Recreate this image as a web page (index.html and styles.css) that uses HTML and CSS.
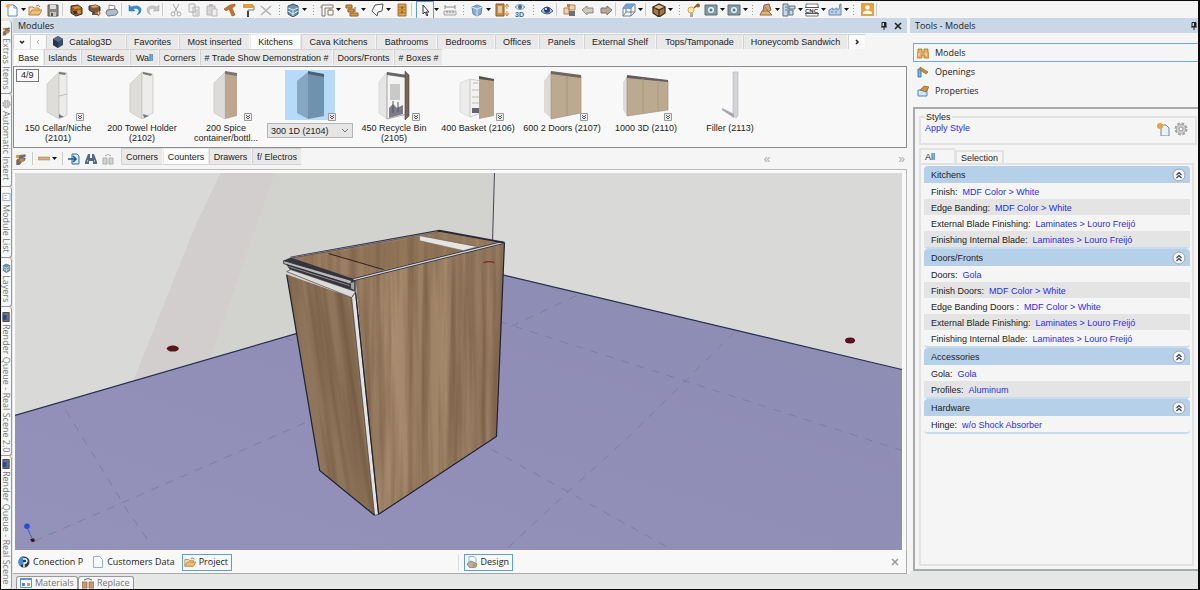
FILE: index.html
```html
<!DOCTYPE html>
<html lang="en">
<head>
<meta charset="utf-8">
<title>Modules</title>
<link rel="stylesheet" href="styles.css">
</head>
<body>
<svg class="defs" aria-hidden="true">
  <defs>
    <symbol id="caret" viewBox="0 0 5 3"><path d="M0 0h5L2.500 3z" fill="#111"/></symbol>
    <symbol id="page" viewBox="0 0 14 14"><path d="M3 2h6l3 3v8H3z" fill="#fff" stroke="#5d8fc4"/><path d="M9 2v3h3" fill="none" stroke="#5d8fc4"/><circle cx="3" cy="3" r="2" fill="#f4a431"/></symbol>
    <symbol id="folder" viewBox="0 0 14 14"><path d="M1 12V4h4l1 1h5v2" fill="#f7ddb0" stroke="#b98440"/><path d="M1 12l3-5h10l-3 5z" fill="#f0bd74" stroke="#b98440"/><path d="M8 3q3-2 4 1" fill="none" stroke="#777"/></symbol>
    <symbol id="save" viewBox="0 0 14 14"><path d="M2 2h10v11H2z" fill="#8b8885" stroke="#5d5955"/><path d="M4 2h6v4H4z" fill="#ddd"/><path d="M4 9h6v4H4z" fill="#c7c3be"/><path d="M5 10h2v3H5z" fill="#555"/></symbol>
    <symbol id="books" viewBox="0 0 14 14"><path d="M2 3l7-1 4 3v6l-6 2-5-3z" fill="#9c5c20" stroke="#3a3028"/><path d="M3 4l6-1 3 2-6 1z" fill="#df8e38"/><path d="M4 8h6v3H5z" fill="#35383d"/><circle cx="10" cy="9" r="2" fill="#e58a22"/></symbol>
    <symbol id="books2" viewBox="0 0 14 14"><path d="M2 3l7-1 4 2v4l-6 2-5-3z" fill="#7a5a38" stroke="#35302c"/><path d="M3 3l6-1 3 2-6 1z" fill="#df9b58"/><path d="M5 10h6v2H5z" fill="#555"/><path d="M8 10h3M11 8l2 2-2 3" stroke="#d07a3a" stroke-width="1.500" fill="none"/></symbol>
    <symbol id="printer" viewBox="0 0 14 14"><path d="M4 2l6 1-1 5H4z" fill="#fff" stroke="#888"/><path d="M2 7l9-1 2 3-2 3-8 1-2-3z" fill="#b7bcc1" stroke="#70767b"/><path d="M4 10l6-1 1 2-6 1z" fill="#9cc1e0"/></symbol>
    <symbol id="undo" viewBox="0 0 14 14"><path d="M1 2v6h6L5 6q5-2 6 2 0 2-2 4 5-2 4-6Q11 1 3 4z" fill="#2f8fd8" stroke="#1c6caa" stroke-width=".5"/></symbol>
    <symbol id="redo" viewBox="0 0 14 14"><path d="M13 2v6H7l2-2Q4 4 3 8q0 2 2 4-5-2-4-6Q3 1 11 4z" fill="#c5c5c5" stroke="#aaa" stroke-width=".5"/></symbol>
    <symbol id="cut" viewBox="0 0 14 14"><path d="M4 1l5 9M10 1L5 10" stroke="#aaa" fill="none"/><circle cx="4" cy="11" r="2" fill="none" stroke="#aaa"/><circle cx="10" cy="11" r="2" fill="none" stroke="#aaa"/></symbol>
    <symbol id="copy" viewBox="0 0 14 14"><path d="M2 1h6v8H2zM6 4h6v9H6z" fill="#eee" stroke="#b4b4b4"/><path d="M8 7h3M8 9h3M8 11h3" stroke="#bbb"/></symbol>
    <symbol id="paste" viewBox="0 0 14 14"><path d="M2 3h8v9H2z" fill="#d6d6d6" stroke="#b4b4b4"/><path d="M4 1h4v3H4z" fill="#bbb"/><path d="M7 6h5v7H7z" fill="#eee" stroke="#bbb"/></symbol>
    <symbol id="hammer" viewBox="0 0 14 14"><path d="M1 6l6-4 5-1v2L9 5l3 7-3 1-3-7-3 2z" fill="#c7712b" stroke="#90501d" stroke-width=".6"/></symbol>
    <symbol id="roller" viewBox="0 0 14 14"><path d="M2 1h10v4H2z" fill="#e79a38"/><path d="M12 3h1v4H7v2" fill="none" stroke="#777"/><path d="M6 8h2v6H6z" fill="#444"/></symbol>
    <symbol id="del" viewBox="0 0 14 14"><path d="M2 3l10 9M12 3L2 12" stroke="#b2b2b2" stroke-width="1.500"/></symbol>
    <symbol id="layers" viewBox="0 0 14 14"><path d="M7 1l5 2v8l-5 3-5-3V3z" fill="#6e95ad" stroke="#34576c"/><path d="M2 5l5 2 5-2M2 8l5 3 5-3M7 7v6" stroke="#d9eaf5" fill="none"/></symbol>
    <symbol id="rects" viewBox="0 0 14 14"><path d="M2 13V2h11v3H5v8z" fill="#fff" stroke="#777"/><path d="M8 7h5v5H8z" fill="#fff" stroke="#8b7558"/><path d="M1 3v2M10 5v3" stroke="#c57c2d"/></symbol>
    <symbol id="bricks" viewBox="0 0 14 14"><path d="M1 2h6v3H1zM3 6h6v3H3zM5 10h8v3H5z" fill="#d9963e" stroke="#94601f"/><path d="M10 4v5" stroke="#666"/></symbol>
    <symbol id="poly" viewBox="0 0 14 14"><path d="M5 2l8-1-1 7-4 1-1 4-5-5z" fill="#fafafa" stroke="#555"/></symbol>
    <symbol id="cabinet" viewBox="0 0 14 14"><path d="M3 1h8v12H3z" fill="#e0a050" stroke="#a8752e"/><path d="M3 4h8M3 7h8M3 10h8" stroke="#a8752e"/><path d="M6 5h2M6 9h2" stroke="#5c3b12"/></symbol>
    <symbol id="pointer" viewBox="0 0 14 14"><path d="M5 2v9l2-2 2 4 1-1-2-3h3z" fill="#fff" stroke="#333"/></symbol>
    <symbol id="ruler" viewBox="0 0 14 14"><path d="M1 8h12v4H1z" fill="#e3e3e3" stroke="#aaa"/><path d="M2 4h10M2 2v4M12 2v4M4 8v2M7 8v2M10 8v2" stroke="#888"/></symbol>
    <symbol id="cube" viewBox="0 0 14 14"><path d="M2 4l5-2 5 2-1 7-4 2-4-2z" fill="#8badcf" stroke="#6a8aae"/><path d="M2 4l5 2 5-2M7 6v7" stroke="#dcecfb" fill="none"/></symbol>
    <symbol id="cabs" viewBox="0 0 14 14"><path d="M1 1h8v12H1z" fill="#c98c49" stroke="#7f5b35"/><path d="M3 3h4v7H3z" fill="#e8c79a"/><path d="M12 1v5M10 4l2-3 2 3M12 8v5M10 10l2 3 2-3" stroke="#d9892c" fill="none"/></symbol>
    <symbol id="threed" viewBox="0 0 14 14"><path d="M2 4q5-5 10 0-5 5-10 0z" fill="#dfe9f2" stroke="#7194b5"/><circle cx="7" cy="4" r="2" fill="#36689b"/><text x="2" y="14" class="glyph">3D</text></symbol>
    <symbol id="eye" viewBox="0 0 14 14"><path d="M1 8q6-8 12 0-6 6-12 0z" fill="#b7c5dc" stroke="#4a5a7c"/><circle cx="7" cy="7" r="3" fill="#28427e"/><circle cx="6" cy="6" r="1" fill="#fff"/></symbol>
    <symbol id="boxes" viewBox="0 0 14 14"><path d="M1 5h5v6H1zM6 2h6v5H6z" fill="#f0d3ac" stroke="#a88355"/><path d="M6 8h6v5H6z" fill="#6b6f78"/><path d="M4 1h3v3H4z" fill="#cf7c2c"/></symbol>
    <symbol id="left" viewBox="0 0 14 14"><path d="M1 7l5-4v2h6v5H6v2z" fill="#cfc8bb" stroke="#8f897e"/></symbol>
    <symbol id="right" viewBox="0 0 14 14"><path d="M13 7L8 3v2H2v5h6v2z" fill="#b5a799" stroke="#807468"/></symbol>
    <symbol id="wire" viewBox="0 0 14 14"><path d="M1 5h8v8H1zM1 5l3-4h9L9 5zM13 1v8l-4 4M4 1v8h9M4 9l-3 4" fill="none" stroke="#708293"/><path d="M1 5l3-4h9L9 5z" fill="#67a6dc"/></symbol>
    <symbol id="box" viewBox="0 0 14 14"><path d="M1 4l6-3 6 3v6l-6 4-6-4z" fill="#a87645" stroke="#3f2c1c" stroke-width="1.300"/><path d="M1 4l6 3 6-3M7 7v7" fill="none" stroke="#3f2c1c" stroke-width="1.300"/><path d="M2 4l5-2 5 2-5 2z" fill="#e1bc8e"/></symbol>
    <symbol id="bulb" viewBox="0 0 14 14"><circle cx="5" cy="7" r="3" fill="#ffe7a6" stroke="#e0a33d"/><path d="M4 10h3v4H4z" fill="#aaa"/><path d="M8 5l3-3" stroke="#8a4e24" stroke-width="1.500"/><circle cx="12" cy="2.500" r="2" fill="#a05a26"/></symbol>
    <symbol id="cam" viewBox="0 0 14 14"><path d="M1 2h12v10H1z" fill="#84999f" stroke="#5c6e76"/><circle cx="7" cy="7" r="3" fill="#eef3f6"/><circle cx="7" cy="7" r="1.500" fill="#3a7bb3"/></symbol>
    <symbol id="worker" viewBox="0 0 14 14"><path d="M5 2l5-1 2 6-3 2-5-1z" fill="#d0a27a" stroke="#8c6340"/><path d="M1 12l2-4h6l4 4z" fill="#e7b46a" stroke="#8f6b43"/><path d="M6 4l3 4" stroke="#777"/></symbol>
    <symbol id="plan" viewBox="0 0 14 14"><path d="M1 1h5v12H1zM7 3h6v3H7zM7 7h4v5H7z" fill="#c9daea" stroke="#58708a"/><path d="M3 4h2M3 7h2" stroke="#58708a"/></symbol>
    <symbol id="cnc" viewBox="0 0 14 14"><path d="M1 1h12v12H1z" fill="#fff" stroke="#777"/><path d="M0 4h14v6H0z" fill="#fff"/><path d="M0 4.500h14M0 10.500h14" stroke="#555"/><text x="0" y="10" class="glyph cnc">CNC</text></symbol>
    <symbol id="factory" viewBox="0 0 14 14"><path d="M1 12V7l4-2v2l4-2v2l2-1 1-5h1v11z" fill="#b6d0e8" stroke="#698cab"/><path d="M3 9h2M7 9h2" stroke="#698cab"/></symbol>
    <symbol id="user" viewBox="0 0 14 14"><path d="M1 0h13v13H1z" fill="#e9a13b"/><circle cx="7.500" cy="4.500" r="2.200" fill="#fff"/><path d="M3 11V9q4-3 9 0v2z" fill="#fff"/></symbol>
    <symbol id="pin" viewBox="0 0 8 8"><path d="M2 .5h4v4H2zM1 5h6M4 5v3" fill="none" stroke="#222"/><path d="M4 1h2v4H4z" fill="#222"/></symbol>
    <symbol id="close" viewBox="0 0 8 8"><path d="M1 1l6 6M7 1L1 7" fill="none" stroke="currentColor" stroke-width="1.600"/></symbol>
    <symbol id="hex" viewBox="0 0 12 12"><path d="M6 0l5 3v6l-5 3-5-3V3z" fill="#3a4b66"/><path d="M6 0l5 3-5 3-5-3z" fill="#56698a"/><path d="M6 6v6l-5-3V3z" fill="#2a3549"/></symbol>
    <symbol id="more" viewBox="0 0 8 8"><path d="M.5.5h7v7h-7z" fill="#eee" stroke="#999"/><path d="M2 2l2 2 2-2M2 4l2 2 2-2" fill="none" stroke="#555"/></symbol>
    <symbol id="chev" viewBox="0 0 14 14"><circle cx="7" cy="7" r="6" fill="#f6f6f8" stroke="#9aa3ad"/><path d="M4.500 7L7 4.500 9.500 7M4.500 10L7 7.500 9.500 10" fill="none" stroke="#333c4e" stroke-width="1.200"/></symbol>
    <symbol id="books3" viewBox="0 0 14 14"><path d="M4 3l8-1v2L8 5l4 1-1 3-3 1-2 3-4 1V8l3-1z" fill="#74706c" stroke="#4c4844" stroke-width=".6"/><path d="M6 6l5 1-1 3-5 1z" fill="#b98a55"/><circle cx="3" cy="4" r="2" fill="#e09237"/><path d="M2 10h4v3H2z" fill="#8a6a48"/></symbol>
    <symbol id="plank" viewBox="0 0 12 6"><path d="M0 1h12v3H0z" fill="#d8ae78" stroke="#9a7c55" stroke-width=".5"/></symbol>
    <symbol id="export" viewBox="0 0 12 12"><path d="M4 1h5l2 2v8H4z" fill="#d9eaf8" stroke="#356da2"/><path d="M0 6h7M5 3l3 3-3 3" fill="none" stroke="#1d5a93" stroke-width="1.600"/></symbol>
    <symbol id="binoc" viewBox="0 0 12 12"><path d="M3 1h2v4h2V1h2l3 8v2H8V8H4v3H0V9z" fill="#4e6a88"/><path d="M2 8h1M9 8h1" stroke="#fff"/></symbol>
    <symbol id="graycopy" viewBox="0 0 12 12"><path d="M1 5h4v6H1zM7 5h4v6H7z" fill="#d2d2d2" stroke="#b0b0b0"/><path d="M3 3q3-3 6 0" stroke="#aaa" fill="none"/></symbol>
    <symbol id="models" viewBox="0 0 12 12"><path d="M1 2h4v3h2V2h4v3l1 2v4H7V8H5v3H0V7l1-2z" fill="#e9ae62" stroke="#a8742e" stroke-width=".8"/><path d="M2 6v3M9 6v3" stroke="#fbe0b6"/></symbol>
    <symbol id="openings" viewBox="0 0 12 12"><path d="M1 3h3v8H1z" fill="#7db4e8" stroke="#437fb8"/><path d="M3 1l8 5-2 2-6-4z" fill="#cf8a38" stroke="#8a5a23" stroke-width=".6"/></symbol>
    <symbol id="props" viewBox="0 0 12 12"><path d="M1 5h9v6H1z" fill="#cfe5f8" stroke="#4a89c4"/><path d="M3 5l4-4 5 1-3 5z" fill="#d38f3e" stroke="#7d5726" stroke-width=".6"/></symbol>
    <symbol id="newpage" viewBox="0 0 14 14"><path d="M5 3h5l3 3v8H5z" fill="#e8f1fa" stroke="#6d87a5"/><circle cx="4" cy="4" r="3" fill="#e8a23f"/></symbol>
    <symbol id="gear" viewBox="0 0 14 14"><circle cx="7" cy="7" r="5" fill="#c8c8c8" stroke="#a5a5a5" stroke-width="3" stroke-dasharray="2.500 1.400"/><circle cx="7" cy="7" r="4.500" fill="#cfcfcf" stroke="#aaa" stroke-width=".6"/><circle cx="7" cy="7" r="2" fill="#f5f5f5" stroke="#999"/></symbol>
    <symbol id="promob" viewBox="0 0 12 12"><circle cx="6" cy="6" r="5.500" fill="#283848"/><path d="M6 0A6 6 0 0 0 2 10L5 8V4z" fill="#3f8fd4"/><path d="M5 3h3q2 2 0 4H6v4" fill="none" stroke="#fff" stroke-width="1.400"/></symbol>
    <symbol id="doc" viewBox="0 0 12 12"><path d="M1.500.5h6l3 3v8h-9z" fill="#f6faff" stroke="#8db0d8"/></symbol>
    <symbol id="designer" viewBox="0 0 12 12"><path d="M3 .5h5l2 2v6H3z" fill="#f6faff" stroke="#8db0d8"/><path d="M1 8l4-3 6 3-1 3-6 1z" fill="#b8b3aa" stroke="#888"/><circle cx="8" cy="9" r="1.500" fill="#db8e2d"/></symbol>
    <symbol id="mats" viewBox="0 0 12 12"><path d="M.5 1.500h11v9H.5z" fill="#fff" stroke="#5f93d0"/><path d="M0 1h12v2H0z" fill="#5f93d0"/><path d="M2 6h3v3H2z" fill="#4c88cc"/><path d="M7 6h3v3H7z" fill="#e58f45"/></symbol>
    <symbol id="replace" viewBox="0 0 12 12"><path d="M0 5h5v6H0zM7 5h5v6H7z" fill="#c99a6c" stroke="#8f7050" stroke-width=".8"/><path d="M2 3q4-3 8 0" stroke="#666" fill="none"/></symbol>
    <symbol id="bluesq" viewBox="0 0 10 10"><path d="M1 1h8v8H1z" fill="#fff" stroke="#84a9d4"/><path d="M3 3h2v1H3zM3 6h2v1H3z" fill="#d05a3a"/></symbol>
    <symbol id="render" viewBox="0 0 10 10"><path d="M1 0h7v10H1z" fill="#6b6f7a" stroke="#444"/><path d="M1 3h4v5H1z" fill="#27449d"/></symbol>
  </defs>
</svg>

<div class="app">
  <header class="toolbar">
    <button class="ic tight" aria-label="New"><svg><use href="#page"/></svg><svg class="ca"><use href="#caret"/></svg></button>
    <button class="ic" aria-label="Open"><svg><use href="#folder"/></svg></button>
    <button class="ic" aria-label="Save"><svg><use href="#save"/></svg></button>
    <i class="sep"></i>
    <button class="ic" aria-label="Library"><svg><use href="#books"/></svg></button>
    <button class="ic" aria-label="Import library"><svg><use href="#books2"/></svg></button>
    <button class="ic" aria-label="Print"><svg><use href="#printer"/></svg></button>
    <i class="sep"></i>
    <button class="ic" aria-label="Undo"><svg><use href="#undo"/></svg></button>
    <button class="ic" aria-label="Redo"><svg><use href="#redo"/></svg></button>
    <i class="sep"></i>
    <button class="ic" aria-label="Cut"><svg><use href="#cut"/></svg></button>
    <button class="ic" aria-label="Copy"><svg><use href="#copy"/></svg></button>
    <button class="ic" aria-label="Paste"><svg><use href="#paste"/></svg></button>
    <button class="ic" aria-label="Build"><svg><use href="#hammer"/></svg></button>
    <button class="ic" aria-label="Paint"><svg><use href="#roller"/></svg></button>
    <button class="ic" aria-label="Delete"><svg><use href="#del"/></svg></button>
    <i class="grip"></i>
    <button class="ic drop" aria-label="Layers"><svg><use href="#layers"/></svg><svg class="ca"><use href="#caret"/></svg></button>
    <i class="grip"></i>
    <button class="ic drop" aria-label="Rooms"><svg><use href="#rects"/></svg><svg class="ca"><use href="#caret"/></svg></button>
    <button class="ic drop" aria-label="Walls"><svg><use href="#bricks"/></svg><svg class="ca"><use href="#caret"/></svg></button>
    <button class="ic drop" aria-label="Polygon"><svg><use href="#poly"/></svg><svg class="ca"><use href="#caret"/></svg></button>
    <button class="ic" aria-label="Cabinet"><svg><use href="#cabinet"/></svg></button>
    <i class="sep"></i>
    <button class="ic drop on" aria-label="Select"><svg><use href="#pointer"/></svg><svg class="ca"><use href="#caret"/></svg></button>
    <button class="ic" aria-label="Measure"><svg><use href="#ruler"/></svg></button>
    <i class="grip"></i>
    <button class="ic drop" aria-label="Solid"><svg><use href="#cube"/></svg><svg class="ca"><use href="#caret"/></svg></button>
    <button class="ic" aria-label="Dimensions"><svg><use href="#cabs"/></svg></button>
    <button class="ic" aria-label="3D view"><svg><use href="#threed"/></svg></button>
    <i class="grip"></i>
    <button class="ic" aria-label="Visibility"><svg><use href="#eye"/></svg></button>
    <i class="sep"></i>
    <button class="ic" aria-label="Group"><svg><use href="#boxes"/></svg></button>
    <button class="ic" aria-label="Previous"><svg><use href="#left"/></svg></button>
    <button class="ic" aria-label="Next"><svg><use href="#right"/></svg></button>
    <i class="sep"></i>
    <button class="ic drop" aria-label="Wireframe"><svg><use href="#wire"/></svg><svg class="ca"><use href="#caret"/></svg></button>
    <i class="sep"></i>
    <button class="ic drop" aria-label="Display"><svg><use href="#box"/></svg><svg class="ca"><use href="#caret"/></svg></button>
    <i class="grip"></i>
    <button class="ic" aria-label="Light"><svg><use href="#bulb"/></svg></button>
    <button class="ic tight" aria-label="Camera"><svg><use href="#cam"/></svg><svg class="ca"><use href="#caret"/></svg></button>
    <button class="ic tight" aria-label="Render"><svg><use href="#cam"/></svg><svg class="ca"><use href="#caret"/></svg></button>
    <i class="grip"></i>
    <button class="ic tight" aria-label="Assembly"><svg><use href="#worker"/></svg><svg class="ca"><use href="#caret"/></svg></button>
    <button class="ic tight" aria-label="Plan"><svg><use href="#plan"/></svg><svg class="ca"><use href="#caret"/></svg></button>
    <button class="ic tight" aria-label="CNC"><svg><use href="#cnc"/></svg><svg class="ca"><use href="#caret"/></svg></button>
    <button class="ic tight" aria-label="Factory"><svg><use href="#factory"/></svg><svg class="ca"><use href="#caret"/></svg></button>
    <i class="grip"></i>
    <button class="ic" aria-label="Account"><svg><use href="#user"/></svg></button>
    <i class="sep"></i>
  </header>

  <div class="body">
    <nav class="rail">
      <button class="vt v1"><svg><use href="#books3"/></svg><span>Extras Items</span></button>
      <button class="vt v2"><svg><use href="#gear"/></svg><span>Automatic Insert</span></button>
      <button class="vt v3"><svg><use href="#bluesq"/></svg><span>Module List</span></button>
      <button class="vt v4"><svg><use href="#layers"/></svg><span>Layers</span></button>
      <button class="vt v5"><svg><use href="#render"/></svg><span>Render Queue - Real Scene 2.0</span></button>
      <button class="vt v6"><svg><use href="#render"/></svg><span>Render Queue - Real Scene</span></button>
    </nav>

    <main class="center">
      <div class="titlebar"><h1>Modules</h1><span class="wbtns"><button aria-label="Pin"><svg><use href="#pin"/></svg></button><button aria-label="Close"><svg><use href="#close"/></svg></button></span></div>
      <div class="tabs top">
        <button aria-label="List" class="nav"><svg viewBox="0 0 8 8"><path d="M2 3l2 2 2-2" fill="none" stroke="#222" stroke-width="1.500"/></svg></button>
        <button aria-label="Back" class="nav"><svg viewBox="0 0 8 8"><path d="M5 2L3 4l2 2" fill="none" stroke="#aaa"/></svg></button>
        <button class="cat"><svg><use href="#hex"/></svg>Catalog3D</button>
        <button>Favorites</button>
        <button>Most inserted</button>
        <button class="sel">Kitchens</button>
        <button>Cava Kitchens</button>
        <button>Bathrooms</button>
        <button>Bedrooms</button>
        <button>Offices</button>
        <button>Panels</button>
        <button>External Shelf</button>
        <button>Tops/Tamponade</button>
        <button>Honeycomb Sandwich</button>
        <button aria-label="Forward" class="nav"><svg viewBox="0 0 8 8"><path d="M3 2l2 2-2 2" fill="none" stroke="#222" stroke-width="1.500"/></svg></button>
      </div>
      <div class="tabs sub">
        <button class="sel">Base</button>
        <button>Islands</button>
        <button>Stewards</button>
        <button>Wall</button>
        <button>Corners</button>
        <button># Trade Show Demonstration #</button>
        <button>Doors/Fronts</button>
        <button># Boxes #</button>
      </div>

      <section class="gallery">
        <span class="badge">4/9</span>
        <figure><svg class="pic" viewBox="0 0 50 50"><path d="M14 14L26 2v47l-12-7z" fill="#deddda" stroke="#c6c6c4" stroke-width=".7"/><path d="M26 2l8 1v42l-8 4z" fill="#edecea" stroke="#c2c2c0" stroke-width=".7"/><path d="M26 2l7 1-1 2-6-1zM26 44l5 3-5 1z" fill="#777"/><path d="M26 26l8-2" stroke="#bbb"/></svg><svg class="more"><use href="#more"/></svg><figcaption>150 Cellar/Niche<br>(2101)</figcaption></figure>
        <figure><svg class="pic" viewBox="0 0 50 50"><path d="M13 14L25 2v47l-12-7z" fill="#deddda" stroke="#c6c6c4" stroke-width=".7"/><path d="M25 2l11 2v39l-11 6z" fill="#edecea" stroke="#c2c2c0" stroke-width=".7"/><path d="M26 2l9 2-1 2-8-2zM26 44l6 2-5 2z" fill="#777"/></svg><figcaption>200 Towel Holder<br>(2102)</figcaption></figure>
        <figure><svg class="pic" viewBox="0 0 50 50"><path d="M13 13L24 2v47l-11-6z" fill="#dcdbd9" stroke="#c6c6c4" stroke-width=".7"/><path d="M24 2l12 2v42l-12 3z" fill="#bfa68e"/><path d="M24 1l12 2v3L24 4z" fill="#777"/></svg><svg class="more"><use href="#more"/></svg><figcaption>200 Spice<br>container/bottl...</figcaption></figure>
        <figure class="picked"><svg class="pic" viewBox="0 0 50 50"><path d="M12 11l11-9v47l-11-6z" fill="#86a6c2"/><path d="M23 2l16 3v41l-16 3z" fill="#6f92ae"/><path d="M23 1l16 3v3L23 4z" fill="#4c5f73"/></svg><svg class="more"><use href="#more"/></svg><select aria-label="Module"><option>300 1D (2104)</option></select></figure>
        <figure><svg class="pic" viewBox="0 0 50 50"><path d="M10 12l8-10v47l-8-6z" fill="#e6e5e3" stroke="#ccc" stroke-width=".6"/><path d="M18 3l20 3v38l-20 5z" fill="#f4f4f4" stroke="#aaa"/><path d="M18 2l20 3v3L18 5z" fill="#666"/><path d="M21 14h10v16H21z" fill="#c9c9c8"/><path d="M20 38l4-4 4 4 6-3v9l-14 4z" fill="#7b7b8a"/><path d="M24 31v12M29 32v10" stroke="#54575f"/><path d="M36 1l4 4v41l-4 4z" fill="#786556" stroke="#4b443f" stroke-width=".6"/></svg><svg class="more"><use href="#more"/></svg><figcaption>450 Recycle Bin<br>(2105)</figcaption></figure>
        <figure><svg class="pic" viewBox="0 0 50 50"><path d="M7 13l10-4v38L7 42z" fill="#ececea" stroke="#ccc" stroke-width=".6"/><path d="M17 9l11 2v32l-11 4z" fill="#f2f2f1" stroke="#ccc"/><path d="M20 13h5M19 20h7M19 27h7M19 33h7" stroke="#bbb"/><path d="M19 38h7v5h-7z" fill="#5e6573"/><path d="M26 7l15 3v36l-15 3z" fill="#b9a489"/><path d="M26 6l15 3v2L26 9z" fill="#555"/></svg><svg class="more"><use href="#more"/></svg><figcaption>400 Basket (2106)</figcaption></figure>
        <figure><svg class="pic" viewBox="0 0 50 50"><path d="M7 11l7-10v47l-7-6z" fill="#dddbd7"/><path d="M14 2l30 4v37l-30 6z" fill="#bcaa90" stroke="#9d8d78" stroke-width=".6"/><path d="M14 1l30 4v3L14 4z" fill="#6f675f"/><path d="M30 6v40" stroke="#a4947d"/></svg><svg class="more"><use href="#more"/></svg><figcaption>600 2 Doors (2107)</figcaption></figure>
        <figure><svg class="pic" viewBox="0 0 50 50"><path d="M2 12l4-6v40l-4-6z" fill="#dddbd7"/><path d="M6 6l41 5v29L6 46z" fill="#bcaa90" stroke="#9d8d78" stroke-width=".6"/><path d="M6 5l41 5v2L6 8z" fill="#625b64"/><path d="M22 8v35M37 10v31" stroke="#a4947d" stroke-width=".7"/></svg><svg class="more"><use href="#more"/></svg><figcaption>1000 3D (2110)</figcaption></figure>
        <figure><svg class="pic" viewBox="0 0 50 50"><path d="M28 2h5v44l-2 2-3-2z" fill="#d3d4d8" stroke="#b5b6bc" stroke-width=".6"/><path d="M17 38l12 6v4l-12-8z" fill="#a7a8ac"/></svg><figcaption>Filler (2113)</figcaption></figure>
      </section>

      <div class="subbar">
        <button aria-label="Edit library"><svg><use href="#books3"/></svg></button>
        <i class="sep"></i>
        <button aria-label="Panel" class="wide"><svg><use href="#plank"/></svg><svg class="ca"><use href="#caret"/></svg></button>
        <i class="sep"></i>
        <button aria-label="Export"><svg><use href="#export"/></svg></button>
        <button aria-label="Find"><svg><use href="#binoc"/></svg></button>
        <button aria-label="Swap"><svg><use href="#graycopy"/></svg></button>
        <div class="tabs mini">
          <button>Corners</button><button class="sel">Counters</button><button>Drawers</button><button>f/ Electros</button>
        </div>
        <span class="pager"><button aria-label="Scroll left">«</button><button aria-label="Scroll right">»</button></span>
      </div>

      <div class="viewport">
        <svg viewBox="15 173 888 378" preserveAspectRatio="xMidYMid slice" role="img" aria-label="Cabinet in a room">
          <defs>
            <filter id="grain" x="0" y="0" width="100%" height="100%" color-interpolation-filters="sRGB">
              <feTurbulence type="fractalNoise" baseFrequency=".12 .004" numOctaves="3" seed="11"/>
              <feColorMatrix values="0 0 0 0 .42  0 0 0 0 .32  0 0 0 0 .23  2 0 0 0 -.720"/>
            </filter>
            <linearGradient id="side" x1="0" x2="1" y1="0" y2="0">
              <stop offset="0" stop-color="#987c60"/><stop offset=".25" stop-color="#aa8d70"/><stop offset=".45" stop-color="#9c8064"/><stop offset=".6" stop-color="#a4886b"/><stop offset=".8" stop-color="#957a60"/><stop offset="1" stop-color="#a18468"/>
            </linearGradient>
            <linearGradient id="floor" x1="0" x2="1" y1="1" y2="0"><stop offset="0" stop-color="#9491bb"/><stop offset="1" stop-color="#8d8cb3"/></linearGradient>
            <clipPath id="cs"><path d="M356 281L505 243L497 437L379 515Z"/></clipPath>
            <clipPath id="cd"><path d="M287 275L352 298L375 516L320 471Z"/></clipPath>
            <clipPath id="ct"><path d="M291 259L440 232L505 244L355 280Z"/></clipPath>
          </defs>
          <path d="M15 173H903V551H15Z" fill="#d9d9d7"/>
          <path d="M275 173H494V290H200Z" fill="#d2d2cf"/>
          <path d="M275 173L200 390H320V280Z" fill="#d2d2cf"/>
          <path d="M221 173H275L200 390H130L196 225Z" fill="#d1cecd"/>
          <path d="M15 416L400 304L494 273L903 370V551H15Z" fill="url(#floor)"/>
          <path d="M15 416L400 304M494 273L903 370" stroke="#25304c" stroke-width="1.200" fill="none"/>
          <path d="M495 173L493 245" stroke="#445" fill="none"/>
          <g fill="none" stroke="#77799a" stroke-width=".8" stroke-dasharray="8 8">
            <path d="M66 411L128 512L151 545M34 542L128 501L322 416M285 338L322 353M500 322L903 451M577 296L505 330M735 333L632 435L568 493L508 549M492 450L566 491L672 550"/>
          </g>
          <ellipse cx="173" cy="349" rx="6" ry="3" fill="#571717"/>
          <ellipse cx="851" cy="341" rx="5" ry="3" fill="#5b1020"/>
          <path d="M291 259L440 231L505 243L355 282Z" fill="#9c7f63"/>
          <path d="M329 254L420 237L420 241L464 251L384 270Z" fill="#937759"/>
          <g clip-path="url(#ct)"><path d="M285 225H510V290H285Z" filter="url(#grain)" opacity=".5"/></g>
          <path d="M420 236L478 247L464 251L420 241Z" fill="#e7e5e1" stroke="#555" stroke-width=".5"/>
          <path d="M329 254L384 270" stroke="#2a2522"/>
          <path d="M356 281L505 243L497 437L379 515Z" fill="url(#side)"/>
          <g clip-path="url(#cs)"><path d="M350 240H510V520H350Z" filter="url(#grain)" opacity=".75"/></g>
          <path d="M287 275L352 298L375 516L320 471Z" fill="#8f755b"/>
          <g clip-path="url(#cd)"><g transform="rotate(-8 320 390)"><path d="M262 240H380V550H262Z" filter="url(#grain)" opacity=".7"/></g></g>
          <path d="M284 261L291 258L356 280L356 293L290 270Z" fill="#35343a"/>
          <path d="M284 261L352 281L352 285L284 264Z" fill="#b6b6bc" stroke="#222" stroke-width=".8"/>
          <path d="M289 267L350 286" stroke="#8b8b94"/>
          <path d="M351 283L355 282L355 291L351 289Z" fill="#a3a3b0" stroke="#333" stroke-width=".6"/>
          <path d="M287 272L291 270L356 292L352 298Z" fill="#dcdbd9" stroke="#333" stroke-width=".6"/>
          <path d="M352 298L356 293L379 515L375 516Z" fill="#e4e3df" stroke="#333" stroke-width=".7"/>
          <path d="M354 280L503 243" stroke="#2c2e3a" stroke-width="3" fill="none"/>
          <path d="M354 280L503 243" stroke="#cfd0d6" stroke-width="1.400" fill="none"/>
          <path d="M291 258L440 231L505 243" stroke="#25283a" stroke-width="2" fill="none"/>
          <path d="M291 258L438 232" stroke="#a3a5b2" stroke-width=".7" fill="none"/>
          <path d="M505 243L497 437L379 515M356 293L379 515M287 275L320 471L375 516" fill="none" stroke="#1d2130" stroke-width="1.200"/>
          <path d="M484 263Q490 261 495 263" stroke="#7b2c25" stroke-width="1.300" fill="none"/>
          <path d="M32 539L27 528" stroke="#3a55e0"/><circle cx="27" cy="527" r="2.800" fill="#2b4bdd"/>
          <path d="M34 535L51 528L47 532L37 534Z" fill="#7fa3a0"/><path d="M30 540l4-1 1 3-3 1z" fill="#3a1613"/>
        </svg>
      </div>

      <div class="docs">
        <div class="dgroup"><button><svg><use href="#promob"/></svg>Conection P</button><button><svg><use href="#doc"/></svg>Customers Data</button><button class="on"><svg><use href="#folder"/></svg>Project</button></div>
        <div class="dgroup second"><button class="on"><svg><use href="#designer"/></svg>Design</button></div>
        <button class="x" aria-label="Close document"><svg><use href="#close"/></svg></button>
      </div>
      <div class="bottom"><button><svg><use href="#mats"/></svg>Materials</button><button><svg><use href="#replace"/></svg>Replace</button></div>
    </main>

    <aside class="side">
      <div class="titlebar"><h2>Tools - Models</h2><span class="wbtns"><button aria-label="Pin"><svg><use href="#pin"/></svg></button></span></div>
      <nav class="tools">
        <button class="on"><svg><use href="#models"/></svg>Models</button>
        <button><svg><use href="#openings"/></svg>Openings</button>
        <button><svg><use href="#props"/></svg>Properties</button>
      </nav>
      <div class="pane">
        <fieldset><legend>Styles</legend><a href="#">Apply Style</a><span><button aria-label="New style"><svg><use href="#newpage"/></svg></button><button aria-label="Settings"><svg><use href="#gear"/></svg></button></span></fieldset>
        <div class="ptabs"><button class="sel">All</button><button>Selection</button></div>
        <div class="groups">
          <section class="grp"><h3>Kitchens<button aria-label="Collapse Kitchens"><svg><use href="#chev"/></svg></button></h3>
            <p>Finish:<a href="#">MDF Color &gt; White</a></p><p>Edge Banding:<a href="#">MDF Color &gt; White</a></p><p>External Blade Finishing:<a href="#">Laminates &gt; Louro Freijó</a></p><p>Finishing Internal Blade:<a href="#">Laminates &gt; Louro Freijó</a></p></section>
          <section class="grp"><h3>Doors/Fronts<button aria-label="Collapse Doors/Fronts"><svg><use href="#chev"/></svg></button></h3>
            <p>Doors:<a href="#">Gola</a></p><p>Finish Doors:<a href="#">MDF Color &gt; White</a></p><p>Edge Banding Doors :<a href="#">MDF Color &gt; White</a></p><p>External Blade Finishing:<a href="#">Laminates &gt; Louro Freijó</a></p><p>Finishing Internal Blade:<a href="#">Laminates &gt; Louro Freijó</a></p></section>
          <section class="grp"><h3>Accessories<button aria-label="Collapse Accessories"><svg><use href="#chev"/></svg></button></h3>
            <p>Gola:<a href="#">Gola</a></p><p>Profiles:<a href="#">Aluminum</a></p></section>
          <section class="grp"><h3>Hardware<button aria-label="Collapse Hardware"><svg><use href="#chev"/></svg></button></h3>
            <p>Hinge:<a href="#">w/o Shock Absorber</a></p></section>
        </div>
      </div>
    </aside>
  </div>
</div>
</body>
</html>
```
FILE: styles.css
```css
* { box-sizing: border-box; }
body { margin: 0; font: 9px/12px "Liberation Sans", Arial, sans-serif; color: #222; }
button { font: inherit; color: inherit; background: none; border: 0; margin: 0; padding: 0; white-space: nowrap; }
svg { display: block; flex: none; }
h1, h2, h3, p, figure { margin: 0; font-weight: normal; }
a { color: #2b2bf0; text-decoration: none; }
.defs { position: absolute; width: 0; height: 0; }
.glyph { font: bold 7px "Liberation Sans", sans-serif; fill: #36689b; }
.cnc { font-size: 6px; fill: #333; }

.app { height: 100vh; overflow: hidden; display: flex; flex-direction: column; background: #f5f5f5; border: 1px solid #0b0b0b; border-right-width: 2px; }
.body { flex: 1; min-height: 0; display: flex; }

/* main toolbar */
.toolbar { height: 17px; flex: none; display: flex; align-items: center; padding-left: 2px; overflow: hidden; }
.ic { width: 18px; height: 15px; flex: none; display: flex; align-items: center; padding-left: 2px; }
.ic svg { width: 14px; height: 14px; }
.ic.drop { width: 25px; }
.ic.tight { width: 23px; }
.ic .ca, .subbar .ca { width: 5px; height: 3px; margin-left: 2px; }
.ic.on svg:first-child { outline: 1px solid #5b9ee0; outline-offset: 1px; }
.sep { width: 5px; height: 13px; flex: none; border-left: 1px solid #ccc; }
.grip { width: 9px; height: 12px; flex: none; background: radial-gradient(circle, #999 1px, transparent 1px) 3px 0 / 3px 3px repeat-y; }

/* vertical tab rail */
.rail { width: 12px; flex: none; padding-top: 3px; display: flex; flex-direction: column; background: #e6e6e6; font: 9px/10px "Open Sans", sans-serif; color: #777; overflow: hidden; }
.vt { width: 11px; flex: none; display: flex; flex-direction: column; align-items: center; gap: 2px; padding-top: 5px; background: #f7f7f7; border: solid #999; border-width: 0 1px 1px 0; border-radius: 0 3px 3px 0; }
.vt svg { width: 9px; height: 10px; }
.vt span { writing-mode: vertical-rl; }
.v1 { height: 73px; } .v2 { height: 93px; } .v3 { height: 71px; } .v4 { height: 49px; } .v5 { height: 149px; } .v6 { flex: 1; padding-top: 3px; border-bottom: 0; }

/* title bars */
.titlebar { height: 15px; flex: none; display: flex; align-items: center; justify-content: space-between; padding: 0 5px; background: #c9d7e6; font-family: "Open Sans", sans-serif; }
.titlebar h1, .titlebar h2 { font-size: 9px; }
.wbtns { display: flex; align-items: center; gap: 6px; }
.wbtns svg, .x svg { width: 8px; height: 8px; }

/* centre column */
.center { flex: 1; min-width: 0; display: flex; flex-direction: column; }
.center .titlebar { margin-right: 3px; }
.tabs { display: grid; flex: none; }
.tabs button { display: flex; align-items: center; justify-content: center; background: #e9e9e9; border: 1px solid #d2d2d2; border-bottom: 0; border-right-color: #f5f5f5; overflow: hidden; }
.tabs .sel { background: #fcfcfc; border-color: #e8e8e8; }
.top { height: 16px; padding-top: 1px; grid-template-columns: 17px 16px 80px 53px 71px 51px 75px 61px 58px 44px 45px 72px 87px 105px 18px; }
.top .nav { background: #fafafa; }
.nav svg { width: 8px; height: 8px; }
.top .cat { gap: 5px; padding-right: 8px; }
.cat svg { width: 12px; height: 12px; }
.sub { height: 17px; padding-bottom: 1px; grid-template-columns: 31px 37px 49px 29px 41px 133px 61px 49px; }

.gallery { position: relative; flex: none; height: 82px; margin-right: 3px; padding: 3px 0 0 2px; display: grid; grid-template-columns: repeat(9, 84px); border: 1px solid #8c8c8c; background: #f8f8f8; text-align: center; line-height: 10px; }
.badge { position: absolute; left: 2px; top: 2px; padding: 0 4px; line-height: 11px; border: 1px solid #777; background: #fbfbfb; }
.gallery figure { position: relative; display: flex; flex-direction: column; align-items: center; gap: 3px; white-space: nowrap; }
.pic { width: 50px; height: 50px; }
.more { position: absolute; right: 16px; top: 43px; width: 8px; height: 8px; }
.picked .pic { background: #b5dbf8; }
.picked select { width: 86px; height: 15px; font: inherit; color: inherit; padding: 0 3px; border: 1px solid #b5b5b5; border-radius: 0; appearance: none; background: #e5e5e5 url("data:image/svg+xml,%3Csvg xmlns='http://www.w3.org/2000/svg' viewBox='0 0 8 5'%3E%3Cpath d='M1 1l3 3 3-3' fill='none' stroke='%23777'/%3E%3C/svg%3E") right 3px center / 8px 5px no-repeat; }

.subbar { height: 21px; flex: none; display: flex; align-items: center; padding-left: 2px; gap: 5px; }
.subbar button { display: flex; align-items: center; }
.subbar svg { width: 12px; height: 12px; }
.subbar .sep { width: 1px; }
.mini { grid-template-columns: 42px 46px 43px 50px; height: 17px; align-self: flex-start; margin-left: 2px; }
.subbar .mini button { border-bottom: 1px solid #d2d2d2; }
.pager { margin-left: auto; padding-right: 5px; display: flex; gap: 128px; color: #aaa; font-size: 12px; }

.viewport { flex: 1; min-height: 0; margin-right: 3px; padding: 3px 4px 1px 2px; border: solid #bbb; border-width: 1px 1px 0 0; background: #fafafa; }
.viewport svg { width: 100%; height: 100%; }

.docs { height: 23px; flex: none; margin-right: 3px; display: flex; align-items: center; border: solid #aaa; border-width: 0 1px 1px 0; padding: 0 7px 0 3px; background: #f8f8f8; font: 9px/12px "Open Sans", sans-serif; }
.dgroup { flex: 0 0 50%; display: flex; gap: 3px; }
.dgroup button { height: 17px; display: flex; align-items: center; gap: 3px; padding: 0 3px 0 1px; border: 1px solid transparent; }
.dgroup .on { border-color: #5b9ee0; }
.dgroup svg { width: 12px; height: 12px; }
.second { flex: 1; padding-left: 5px; border-left: 1px solid #ddd; }
.docs .x { color: #999; }
.bottom { height: 15px; flex: none; display: flex; padding: 2px 0 0 3px; background: #e5e6e6; font: 9px/12px "Open Sans", sans-serif; color: #777; }
.bottom button { display: flex; align-items: center; gap: 3px; padding: 0 3px; border: 1px solid #999; border-bottom: 0; border-radius: 3px 3px 0 0; background: #f5f5f5; }
.bottom svg { width: 12px; height: 12px; }

/* tools column */
.side { width: 288px; flex: none; display: flex; flex-direction: column; border-bottom: 18px solid #e5e6e6; }
.side .titlebar { padding-right: 0; }
.tools { padding: 10px 0 7px 3px; flex: none; display: flex; flex-direction: column; }
.tools button { height: 19px; display: flex; align-items: center; gap: 6px; padding-left: 3px; border: 1px solid transparent; border-right: 0; font-family: "Open Sans", sans-serif; }
.tools .on { border-color: #6aaae6; }
.tools svg { width: 12px; height: 12px; }
.pane { flex: 1; min-height: 0; margin-left: 3px; padding: 3px 1px 3px 4px; display: flex; flex-direction: column; border: 2px solid #aaa; border-right: 0; }
fieldset { position: relative; flex: none; margin: 0; height: 33px; padding: 0 7px 0 4px; border: 2px solid #e2e2e2; display: flex; align-items: flex-start; justify-content: space-between; }
legend { padding: 0 1px; margin: 0; line-height: 10px; }
fieldset span { display: flex; gap: 4px; margin-left: auto; }
fieldset svg { width: 14px; height: 14px; }
fieldset a { line-height: 12px; }
.ptabs { flex: none; display: flex; align-items: flex-end; margin-top: 3px; }
.ptabs button { height: 13px; padding: 0 4px; border: 2px solid #e2e2e2; border-bottom: 0; line-height: 10px; }
.ptabs .sel { width: 36px; height: 15px; text-align: left; border-right-width: 1px; }
.groups { flex: 1; min-height: 0; padding: 1px 2px 0 3px; margin-right: 3px; border: 2px solid #e2e2e2; }
.grp { border-bottom: 2px solid #c8dcee; border-radius: 4px; overflow: hidden; }
.grp h3 { height: 17px; font-size: 9px; line-height: 16px; padding: 0 4px 0 7px; background: #b7d0ea; display: flex; justify-content: space-between; align-items: center; }
.grp svg { width: 14px; height: 14px; }
.grp p { height: 16px; line-height: 19px; padding-left: 7px; display: flex; gap: 5px; }
.grp p:nth-of-type(even) { background: #e4e4e4; }
```
